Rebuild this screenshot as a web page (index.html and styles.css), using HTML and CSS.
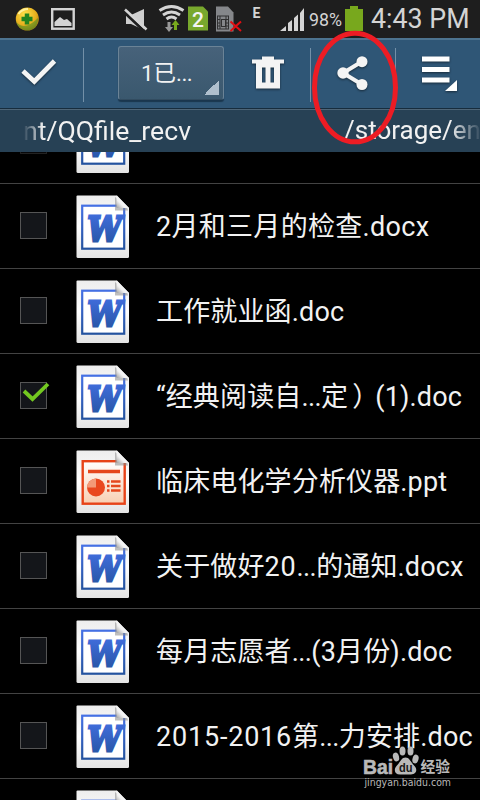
FILE: index.html
```html
<!DOCTYPE html>
<html lang="zh-CN">
<head>
<meta charset="utf-8">
<title>QQfile_recv</title>
<link rel="stylesheet" href="styles.css">
</head>
<body>
<svg class="defs" width="0" height="0" aria-hidden="true">
  <defs>
    <linearGradient id="paper" x1="0" y1="0" x2="0" y2="1"><stop offset="0" stop-color="#ededed"/><stop offset=".5" stop-color="#fff"/><stop offset="1" stop-color="#e4e4e4"/></linearGradient>
    <linearGradient id="blue" x1="0" y1="0" x2="0" y2="1"><stop offset="0" stop-color="#4470e4"/><stop offset="1" stop-color="#24539f"/></linearGradient>
    <linearGradient id="peach" x1="0" y1="0" x2="0" y2="1"><stop offset="0" stop-color="#fff"/><stop offset="1" stop-color="#f8cfb2"/></linearGradient>
    <linearGradient id="fold" x1="0" y1="1" x2="1" y2="0"><stop offset="0" stop-color="#a0a0a0"/><stop offset=".35" stop-color="#f2f2f2"/><stop offset="1" stop-color="#fff"/></linearGradient>
    <radialGradient id="ball" cx=".4" cy=".3" r=".75"><stop offset="0" stop-color="#ffe34b"/><stop offset=".65" stop-color="#e6ad1c"/><stop offset="1" stop-color="#a87310"/></radialGradient>
    <symbol id="word" viewBox="0 0 54 64">
      <path d="M1.500.5H41L53 13V61.500Q53 63 51.500 63H2Q.5 63 .5 61.500V1.500Q.5.5 1.500.5Z" fill="url(#paper)"/>
      <rect x="6.200" y="10.700" width="42" height="43" fill="#fff" stroke="url(#blue)" stroke-width="2.200"/>
      <text class="letter" x="11.500" y="45.500" textLength="34" lengthAdjust="spacingAndGlyphs" fill="url(#blue)" stroke="url(#blue)">W</text>
      <path d="M39 2V15.500H52L51 12Z" fill="#888" opacity=".55"/>
      <path d="M40.500.5V13H53Z" fill="url(#fold)"/>
    </symbol>
    <symbol id="slides" viewBox="0 0 54 64">
      <path d="M1.500.5H41L53 13V61.500Q53 63 51.500 63H2Q.5 63 .5 61.500V1.500Q.5.5 1.500.5Z" fill="url(#paper)"/>
      <rect x="6.700" y="11.200" width="42" height="42.500" fill="url(#peach)" stroke="#e74318" stroke-width="2.400"/>
      <path d="M12 21.500H44" stroke="#e5471d" stroke-width="3.500"/>
      <circle cx="20" cy="37.500" r="9" fill="#e9481f"/>
      <path d="M20 37.500V28.500A9 9 0 0 0 11 37.500Z" fill="#f39a78"/>
      <path d="M31 31.500h2.500M35 31.500h9.500M31 36h2.500M35 36h9.500M31 40.500h2.500M35 40.500h9.500" stroke="#e5471d" stroke-width="2.500"/>
      <path d="M39 2V15.500H52L51 12Z" fill="#888" opacity=".55"/>
      <path d="M40.500.5V13H53Z" fill="url(#fold)"/>
    </symbol>
  </defs>
</svg>

<div class="screen">
  <header class="status">
    <svg class="status-icons" width="480" height="38" viewBox="0 0 480 38">
      <circle cx="27.300" cy="19" r="11.500" fill="url(#ball)"/>
      <path d="M16 21C19 27 27 29 38 18Q38 30 27.300 30.500Q18 30 16 21Z" fill="#3f8f25" opacity=".55"/>
      <path d="M18.500 14Q22 9 28 9" stroke="#fff19b" stroke-width="2" fill="none"/>
      <path d="M27 13.500V24.500M21.500 19H32.500" stroke="#23831f" stroke-width="4.500"/>
      <rect x="52.200" y="9.200" width="21.500" height="19.500" fill="none" stroke="#d4d4d4" stroke-width="2.400"/>
      <path d="M54.500 26V22L60 17L64 20L67 19L71.500 23V26Z" fill="#d4d4d4"/>
      <path d="M126 15H131L144 9V30L131 24H126Z" fill="#cfcfcf"/>
      <path d="M123 11L144 31" stroke="#1e1e1e" stroke-width="3"/>
      <path d="M125 9.500L146.500 29.500" stroke="#d4d4d4" stroke-width="2.500"/>
      <g fill="none" stroke="#d4d4d4" stroke-width="2.900"><path d="M159.500 10.500Q171.500 2.500 183.500 10.500"/><path d="M163 15Q171.500 9 180 15"/><path d="M166.500 19Q171.500 15 176.500 19"/></g>
      <path d="M167.500 22h3v5h2.500l-4 5l-4-5h2.500z" fill="#999"/>
      <path d="M174 30h3v-5h2.500l-4-5l-4 5h2.500z" fill="#78a91d"/>
      <path d="M188 6.500H203L208 11.500V30.500H188Z" fill="#78a82d"/>
      <path d="M216 6.500H228L233.500 12.500V31.500H216Z" fill="#85878a"/>
      <rect x="217.500" y="16" width="11" height="13" fill="none" stroke="#303030"/>
      <path d="M220 16v13M226 16v13M217 19.500h3M226 19.500h3M217 23h3M226 23h3M217 26h3M226 26h3" stroke="#303030"/>
      <rect x="221.500" y="19.500" width="4" height="7" fill="none" stroke="#303030"/>
      <path d="M230.500 21.500L241 31M241 21.500L230.500 31" stroke="#e30d12" stroke-width="2"/>
      <path d="M280 31L286 26V31ZM288 23L292 20V31H288ZM294 18L298 14.500V31H294ZM300 13L304 8V31H300Z" fill="#d4d4d4"/>
      <path d="M350 6H358V9H363V31H345V9H350Z" fill="#78a81d"/>
      <text class="sim" x="192" y="27">2</text>
      <text class="net" x="252.500" y="17.500">E</text>
      <text class="pct" x="309" y="26" textLength="33" lengthAdjust="spacingAndGlyphs">98%</text>
      <text class="clock" x="371" y="27.500" textLength="98.500" lengthAdjust="spacingAndGlyphs">4:43 PM</text>
    </svg>
  </header>

  <nav class="actions">
    <svg class="done" width="36" height="28" viewBox="0 0 36 28"><path d="M2 13L13.300 23.500L33.500 3" fill="none" stroke="#f4f4f4" stroke-width="4.800"/></svg>
    <i class="sep sep-1"></i>
    <button class="picker">1已<span class="dots">...</span></button>
    <svg class="trash" width="32" height="34" viewBox="0 0 32 34"><path d="M0 3.500H10V.5H22V3.500H32V7.500H28V32.500H4V7.500H0ZM10 11.500V26.500H13.500V11.500ZM18.500 11.500V26.500H22V11.500Z" fill="#f4f4f4" fill-rule="evenodd"/></svg>
    <i class="sep sep-2"></i>
    <svg class="share" width="32" height="34" viewBox="0 0 32 34"><path d="M25 5.500L6 17L25 28.500" fill="none" stroke="#f4f4f4" stroke-width="4"/><g fill="#f4f4f4"><circle cx="25" cy="5.700" r="5.500"/><circle cx="6" cy="17" r="5.700"/><circle cx="25" cy="28.500" r="5.500"/></g></svg>
    <i class="sep sep-3"></i>
    <svg class="menu" width="36" height="36" viewBox="0 0 36 36"><path d="M0 3H27.500M0 13.500H27.500M0 24H27.500" stroke="#fff" stroke-width="5.200"/><path d="M23 35H35V24Z" fill="#fff"/></svg>
  </nav>

  <div class="path"><span class="tail">ent/QQfile_recv</span><span class="head">/storage/en</span></div>

  <main class="list">
    <div class="row first"><i class="box faint"></i><svg class="file"><use href="#word"/></svg></div>
    <div class="row"><i class="box"></i><svg class="file"><use href="#word"/></svg><span class="name wide">2月和三月的检查.docx</span></div>
    <div class="row"><i class="box"></i><svg class="file"><use href="#word"/></svg><span class="name">工作就业函.doc</span></div>
    <div class="row"><i class="box"><svg class="tick" width="28" height="22" viewBox="0 0 28 22"><path d="M2 9L10.500 17L26 2" fill="none" stroke="#73c820" stroke-width="3.800"/></svg></i><svg class="file"><use href="#word"/></svg><span class="name">“经典阅读自<span class="dots">...</span>定<span class="paren">）</span>(1).doc</span></div>
    <div class="row"><i class="box"></i><svg class="file"><use href="#slides"/></svg><span class="name">临床电化学分析仪器.ppt</span></div>
    <div class="row"><i class="box"></i><svg class="file"><use href="#word"/></svg><span class="name">关于做好<span class="num">20</span><span class="dots">...</span>的通知.docx</span></div>
    <div class="row"><i class="box"></i><svg class="file"><use href="#word"/></svg><span class="name">每月志愿者<span class="dots">...</span>(3月份).doc</span></div>
    <div class="row"><i class="box"></i><svg class="file"><use href="#word"/></svg><span class="name"><span class="num">2015-2016</span>第<span class="dots">...</span>力安排.doc</span></div>
    <div class="row"><i class="box"></i><svg class="file"><use href="#word"/></svg></div>
  </main>

  <svg class="ring" width="90" height="118" viewBox="0 0 90 118"><ellipse cx="45" cy="58.500" rx="40.500" ry="54.300" fill="none" stroke="#ed1c24" stroke-width="5"/></svg>

  <svg class="watermark" width="96" height="46" viewBox="0 0 96 46">
    <g fill="#b9b9b9">
      <text class="brand" x="2" y="28.500" textLength="30" lengthAdjust="spacingAndGlyphs">Bai</text>
      <ellipse cx="35" cy="12" rx="3" ry="4.500" transform="rotate(-15 35 12)"/>
      <ellipse cx="41.500" cy="6" rx="3" ry="4.500"/>
      <ellipse cx="49.500" cy="6" rx="3" ry="4.500"/>
      <ellipse cx="54.500" cy="14" rx="3" ry="4.500" transform="rotate(15 54.500 14)"/>
      <path d="M44.500 12.500C49 12.500 50 18 53.500 21C57 25 55 29.500 50 29.500H39C33.500 29.500 32.500 24.500 35.500 21C39 18 40 12.500 44.500 12.500Z"/>
      <text class="cjk" x="59.500" y="27" textLength="29.500" lengthAdjust="spacingAndGlyphs">经验</text>
      <text class="site" x="3.500" y="40.500" textLength="86.500" lengthAdjust="spacingAndGlyphs">jingyan.baidu.com</text>
    </g>
    <text class="du" x="38" y="27" textLength="13.500" lengthAdjust="spacingAndGlyphs">du</text>
  </svg>
</div>
</body>
</html>
```
FILE: styles.css
```css
* { box-sizing: border-box; }
body { margin: 0; background: #000; font-family: Roboto, "Noto Sans CJK SC", sans-serif; color: #f2f2f2; }
.defs { position: absolute; }
.screen { position: relative; width: 480px; height: 800px; overflow: hidden; }

.status { height: 38px; background: #1e1e1e; }
.status-icons { display: block; fill: #d4d4d4; }
.sim { font: 500 21px Roboto, sans-serif; fill: #f4f4f4; }
.net { font: 700 14px Roboto, sans-serif; }
.pct { font-size: 18px; }
.clock { font-size: 27px; }

.actions { display: flex; align-items: flex-start; height: 71px; background: #2f5676; border-top: 2px solid #4d738f; border-bottom: 1px solid #172c3d; }
.actions svg { filter: drop-shadow(0 1px 1px rgba(0,0,0,.5)); flex: none; }
.done { margin: 18px 0 0 21px; }
.sep { width: 1px; height: 54px; margin-top: 8px; background: #7390a8; }
.sep-1 { margin-left: 26px; }
.picker { width: 106px; height: 54px; margin: 6px 0 0 34px; padding: 0 9px 4px 0; border: 1px solid #6b8396; border-bottom-color: #324c60; border-radius: 3px; color: #f2f2f2; font: 22.500px Roboto, "Noto Sans CJK SC", sans-serif; background: linear-gradient(135deg, transparent 50%, #afbfcd 50%) right 4px bottom 4px / 15px 15px no-repeat, linear-gradient(#47627a, #3a586e); box-shadow: 0 2px 1px rgba(10,30,45,.55); }
.trash { margin: 16px 0 0 28px; }
.sep-2 { margin-left: 26px; }
.share { margin: 16px 0 0 26px; }
.sep-3 { margin-left: 26px; }
.menu { margin: 16px 0 0 26px; }

.path { display: flex; justify-content: space-between; height: 43px; padding: 0 0 0 9px; border-top: 1px solid #4e6577; background: #274155; font-size: 26.600px; line-height: 41px; white-space: nowrap; }
.tail { -webkit-mask-image: linear-gradient(90deg, transparent 14px, #000 34px); mask-image: linear-gradient(90deg, transparent 14px, #000 34px); }
.head { width: 136px; font-size: 26px; -webkit-mask-image: linear-gradient(90deg, #000 106px, transparent 138px); mask-image: linear-gradient(90deg, #000 106px, transparent 138px); }

.list { height: 648px; overflow: hidden; }
.row { display: flex; align-items: flex-start; height: 85px; border-bottom: 1px solid #434343; }
.first { margin-top: -53px; }
.box { position: relative; flex: none; width: 27px; height: 27px; margin: 28px 29px 0 20px; border: 1px solid #555; background: #14161a; }
.faint { opacity: .4; }
.tick { position: absolute; left: 1px; top: -1px; }
.file { flex: none; width: 54px; height: 64px; margin-top: 11px; }
.letter { font: italic 700 34px "DejaVu Serif", serif; stroke-width: 2.800px; }
.name { margin-left: 26px; font-size: 27px; line-height: 86px; letter-spacing: .15px; white-space: nowrap; }
.wide { letter-spacing: .3px; }
.num { letter-spacing: .8px; }
.dots { letter-spacing: -.6px; }
.paren { position: relative; left: 4px; }

.ring { position: absolute; left: 310px; top: 29px; }
.watermark { position: absolute; left: 361px; top: 745px; }
.brand { font: 700 20px "Liberation Sans", sans-serif; stroke: #b9b9b9; stroke-width: .6px; }
.cjk { font: 700 15px "Noto Sans CJK SC", sans-serif; }
.site { font: 10px "DejaVu Sans", sans-serif; }
.du { font: 700 12px "Liberation Sans", sans-serif; fill: #161616; }
```
